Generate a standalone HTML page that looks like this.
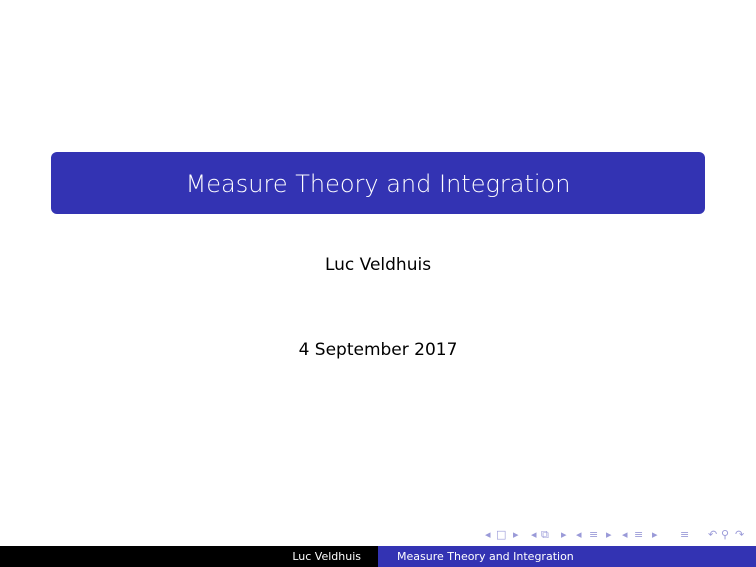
<!DOCTYPE html>
<html><head><style>
body{margin:0;width:756px;height:567px;position:relative;background:#fff;font-family:"DejaVu Sans","Liberation Sans",sans-serif;overflow:hidden}
.t{position:absolute;left:51px;top:152px;width:654px;height:62px;background:#3333b3;border-radius:6px;color:#fff;font-size:24px;line-height:64px;text-align:center;font-weight:300}
.c{position:absolute;left:0;width:756px;text-align:center;font-size:17px;color:#000}
.bar{position:absolute;top:546px;height:21px;font-size:11px;line-height:21px;color:#fff}
.nav{position:absolute;top:528px;font-size:11px;color:#9a9ad8}
</style></head><body>
<div class="t">Measure Theory and Integration</div>
<div class="c" style="top:255px">Luc Veldhuis</div>
<div class="c" style="top:340px">4 September 2017</div>
<div class="nav" style="left:485px">◂</div><div class="nav" style="left:496px">□</div><div class="nav" style="left:513px">▸</div>
<div class="nav" style="left:531px">◂</div><div class="nav" style="left:541px">⧉</div><div class="nav" style="left:561px">▸</div>
<div class="nav" style="left:576px">◂</div><div class="nav" style="left:589px">≡</div><div class="nav" style="left:606px">▸</div>
<div class="nav" style="left:622px">◂</div><div class="nav" style="left:634px">≡</div><div class="nav" style="left:652px">▸</div>
<div class="nav" style="left:680px">≡</div>
<div class="nav" style="left:708px">↶</div><div class="nav" style="left:721px">⚲</div><div class="nav" style="left:735px">↷</div>
<div class="bar" style="left:0;width:378px;background:#000;text-align:right"><span style="margin-right:17px">Luc Veldhuis</span></div>
<div class="bar" style="left:378px;width:378px;background:#3333b3"><span style="margin-left:19px">Measure Theory and Integration</span></div>
</body></html>
